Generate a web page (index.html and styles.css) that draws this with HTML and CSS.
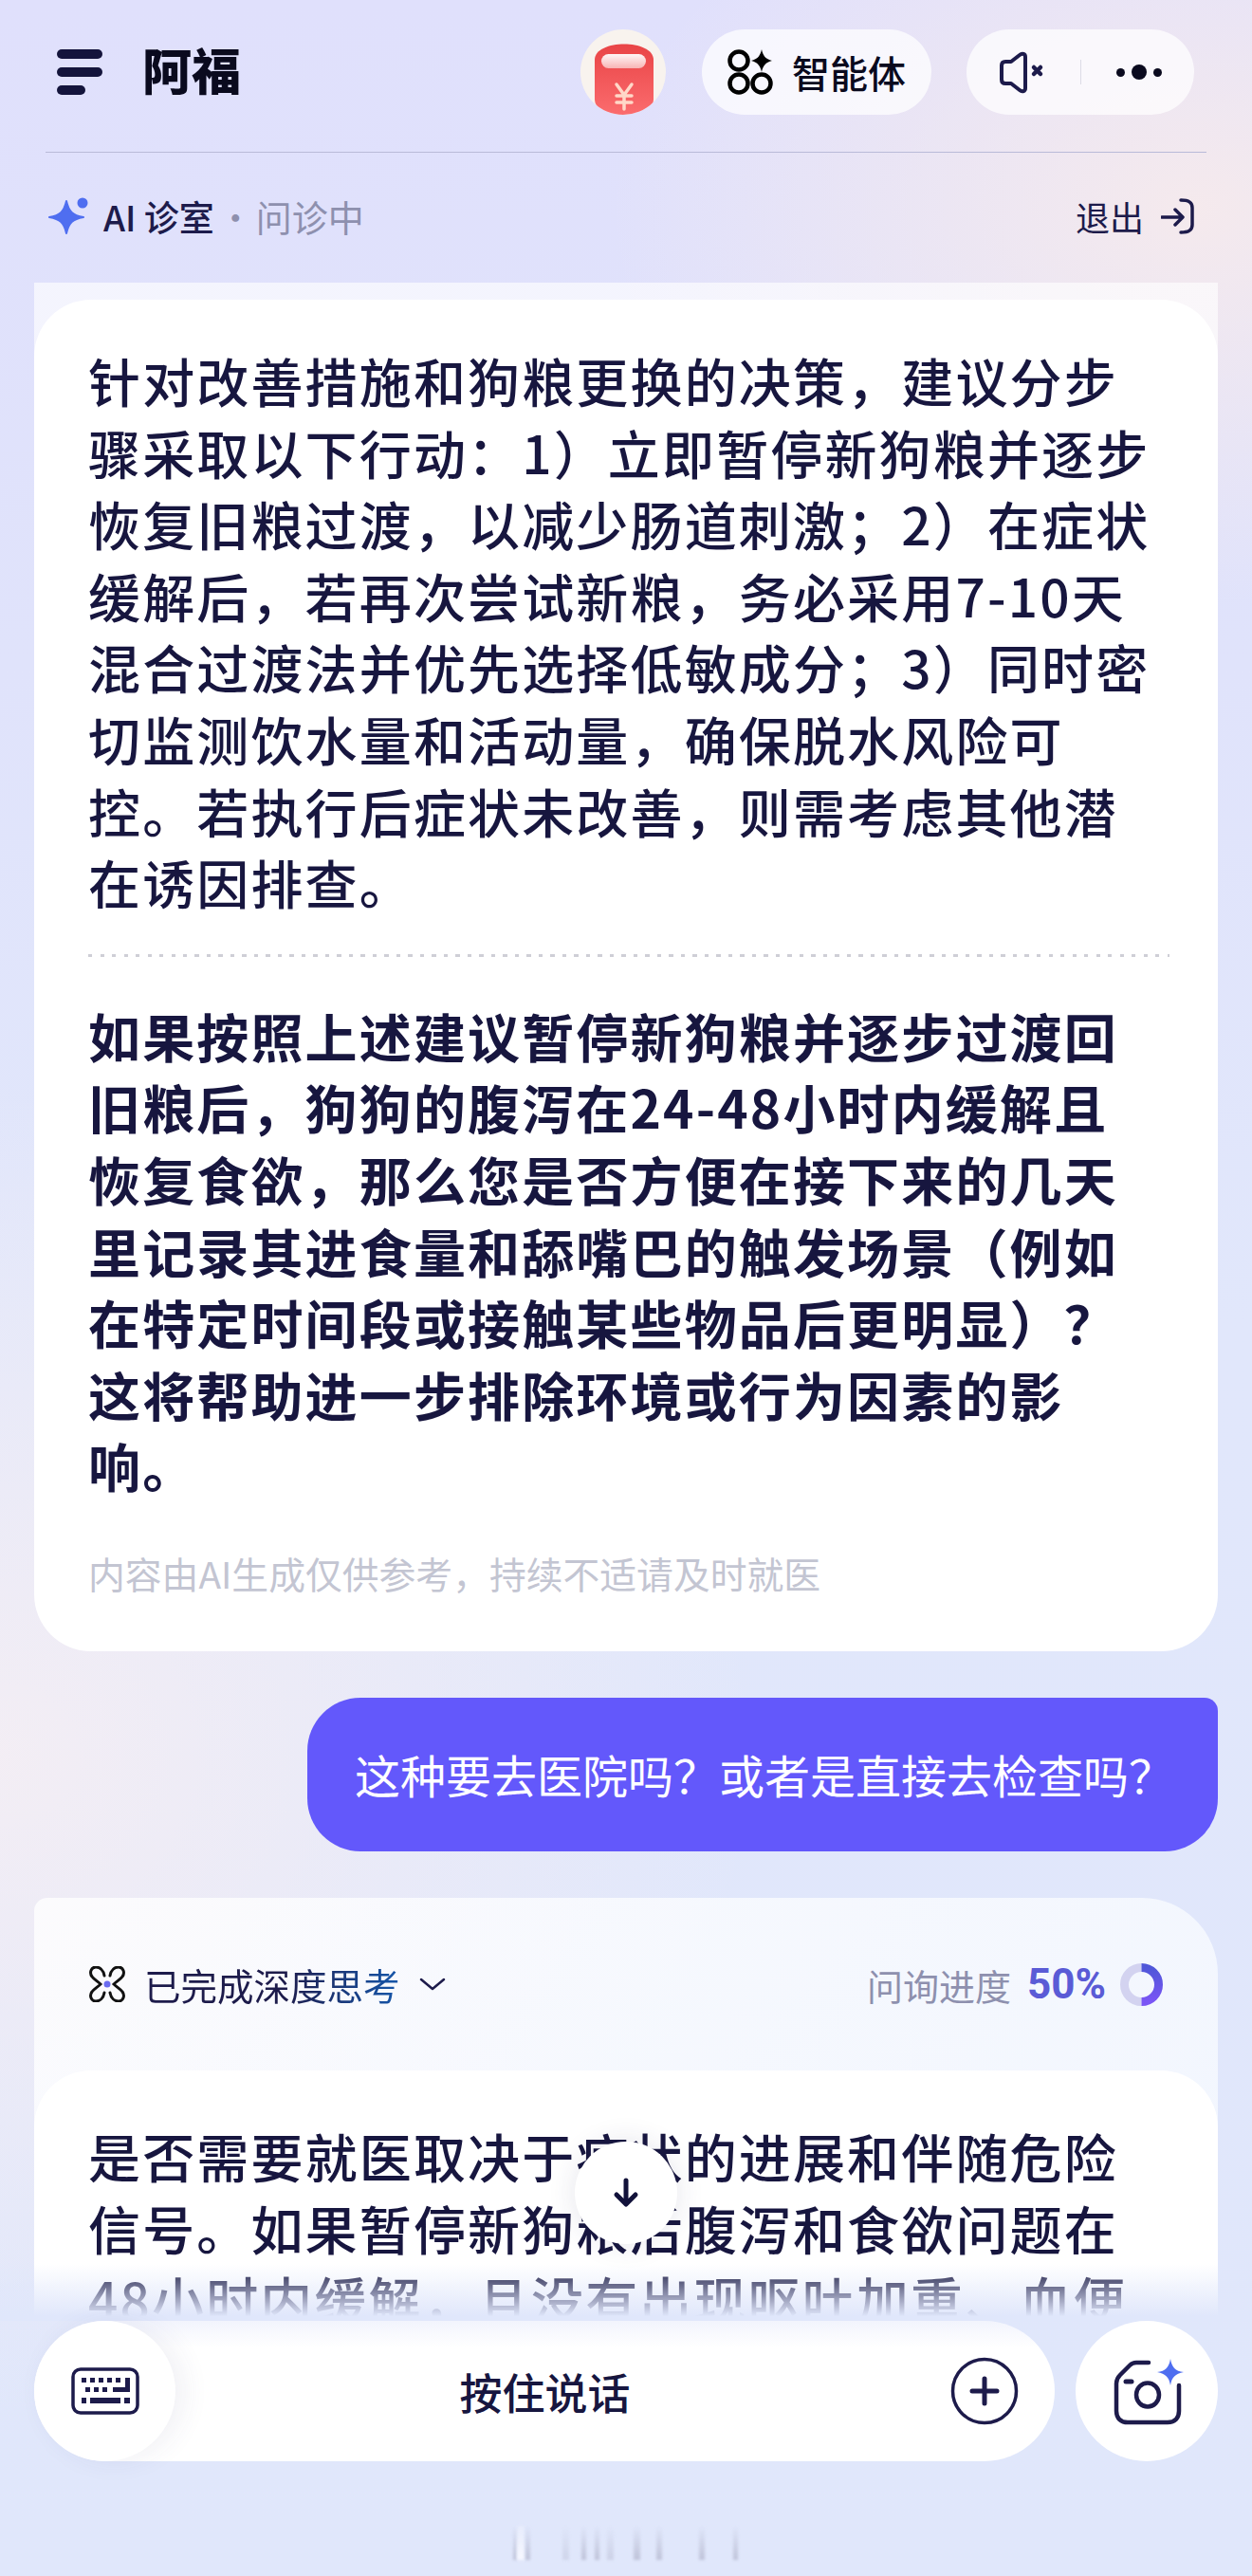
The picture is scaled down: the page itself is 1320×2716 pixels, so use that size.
FILE: index.html
```html
<!DOCTYPE html>
<html lang="zh-CN">
<head>
<meta charset="utf-8">
<title>阿福</title>
<link rel="stylesheet" href="styles.css">
</head>
<body>
<div class="app">
  <header class="topbar">
    <div class="brand">
      <span class="burger"><i></i><i></i><i class="short"></i></span>
      <span class="title">阿福</span>
    </div>
    <div class="actions">
      <span class="avatar">
        <svg viewBox="0 0 90 90" width="90" height="90">
          <defs>
            <linearGradient id="jar" x1="0" y1="0" x2="0" y2="1"><stop offset="0" stop-color="#e94446"/><stop offset="1" stop-color="#fb6c6e"/></linearGradient>
            <linearGradient id="lid" x1="0" y1="0" x2="0" y2="1"><stop offset="0" stop-color="#fff" stop-opacity=".95"/><stop offset="1" stop-color="#f8b4b4"/></linearGradient>
          </defs>
          <path d="M15 32C15 10 77 10 77 32V74C77 96 15 96 15 74z" fill="url(#jar)"/>
          <rect x="22" y="26" width="47" height="15" rx="7.500" fill="url(#lid)"/>
          <path d="M38 58l8 11 8-11M46 69v15M38 70h16M38 77h16" fill="none" stroke="#ffd8c8" stroke-width="3.500" stroke-linecap="round"/>
        </svg>
      </span>
      <span class="pill agent">
        <svg class="agent-icon" viewBox="0 0 48 48" width="48" height="48">
          <circle cx="12" cy="12" r="9.500" fill="none" stroke="#000" stroke-width="4.500"/>
          <circle cx="12" cy="36" r="9.500" fill="none" stroke="#000" stroke-width="4.500"/>
          <circle cx="36" cy="36" r="9.500" fill="none" stroke="#000" stroke-width="4.500"/>
          <path d="M36 0c1.500 7 4 10 11 12-7 2-9.500 5-11 12-1.500-7-4-10-11-12 7-2 9.500-5 11-12z"/>
        </svg>
        <span>智能体</span>
      </span>
      <span class="pill tools">
        <svg viewBox="0 0 50 50" width="50" height="50">
          <path d="M4 18c0-2 1-4 4-4h6L23 7c3-2.500 6-1 6 2v33c0 3-3 4.500-6 2L14 37H8c-3 0-4-2-4-4z" fill="none" stroke="#1d1b4b" stroke-width="4" stroke-linejoin="round"/>
          <path d="M38 20l7 7M45 20l-7 7" stroke="#1d1b4b" stroke-width="4.500" stroke-linecap="round"/>
        </svg>
        <i class="vsep"></i>
        <span class="dots"><i></i><i class="big"></i><i></i></span>
      </span>
    </div>
  </header>

  <div class="subbar">
    <div class="room">
      <svg viewBox="0 0 42 40" width="42" height="40">
        <path d="M19 4c2.500 11 6.500 15 18 17-11.500 2-15.500 6-18 17-2.500-11-6.500-15-18-17 11.500-2 15.500-6 18-17z" fill="#4f6ef0" stroke="#4f6ef0" stroke-width="2" stroke-linejoin="round"/>
        <circle cx="36" cy="6" r="5.500" fill="#4f6ef0"/>
      </svg>
      <span class="room-name">AI 诊室</span>
      <span class="room-sep">·</span>
      <span class="room-state">问诊中</span>
    </div>
    <div class="exit">
      <span>退出</span>
      <svg viewBox="0 0 36 40" width="36" height="40">
        <path d="M1 21h21M15 13l8 8-8 8" fill="none" stroke="#1d1b4b" stroke-width="3.500" stroke-linecap="round" stroke-linejoin="round"/>
        <path d="M21 3c8 0 12 2 12 8v18c0 6-4 8-12 8" fill="none" stroke="#1d1b4b" stroke-width="3.500" stroke-linecap="round"/>
      </svg>
    </div>
  </div>

  <main class="chat">
    <section class="group first">
      <article class="card">
        <p class="answer">针对改善措施和狗粮更换的决策，建议分步<br>骤采取以下行动：1）立即暂停新狗粮并逐步<br>恢复旧粮过渡，以减少肠道刺激；2）在症状<br>缓解后，若再次尝试新粮，务必采用7-10天<br>混合过渡法并优先选择低敏成分；3）同时密<br>切监测饮水量和活动量，确保脱水风险可<br>控。若执行后症状未改善，则需考虑其他潜<br>在诱因排查。</p>
        <hr class="dotted">
        <p class="answer strong">如果按照上述建议暂停新狗粮并逐步过渡回<br>旧粮后，狗狗的腹泻在24-48小时内缓解且<br>恢复食欲，那么您是否方便在接下来的几天<br>里记录其进食量和舔嘴巴的触发场景（例如<br>在特定时间段或接触某些物品后更明显）？<br>这将帮助进一步排除环境或行为因素的影<br>响。</p>
        <p class="note">内容由AI生成仅供参考，持续不适请及时就医</p>
      </article>
    </section>

    <div class="user-row">
      <div class="bubble">这种要去医院吗？或者是直接去检查吗？</div>
    </div>

    <section class="group second">
      <div class="think">
        <div class="think-left">
          <svg viewBox="0 0 38 38" width="38" height="38">
            <path d="M16 10C15 4 11 1 7 1 2 1 0 7 3 11c2 3 6 5 9 8-3 3-7 5-9 8-3 4-1 10 4 10 4 0 8-3 9-9M22 10c1-6 5-9 9-9 5 0 7 6 4 10-2 3-6 5-9 8 3 3 7 5 9 8 3 4 1 10-4 10-4 0-8-3-9-9" fill="none" stroke="#111" stroke-width="3" stroke-linecap="round"/>
            <circle cx="19" cy="19" r="3.500" fill="#6a6cf0"/>
          </svg>
          <span class="think-text">已完成深度思考</span>
          <svg class="chev" viewBox="0 0 28 14" width="28" height="14"><path d="M2 2l12 10L26 2" fill="none" stroke="#1d1b4b" stroke-width="2.500" stroke-linecap="round" stroke-linejoin="round"/></svg>
        </div>
        <div class="progress">
          <span class="progress-label">问询进度</span>
          <span class="progress-value">50%</span>
          <svg viewBox="0 0 45 45" width="45" height="45">
            <defs><linearGradient id="ring" x1="0" y1="0" x2="0" y2="1"><stop offset="0" stop-color="#4f57d8"/><stop offset="1" stop-color="#7a55f5"/></linearGradient></defs>
            <path d="M22.500 4.500a18 18 0 0 0 0 36" fill="none" stroke="#d3d3f0" stroke-width="9"/>
            <path d="M22.500 4.500a18 18 0 0 1 0 36" fill="none" stroke="url(#ring)" stroke-width="9"/>
          </svg>
        </div>
      </div>
      <article class="card">
        <p class="answer">是否需要就医取决于症状的进展和伴随危险<br>信号。如果暂停新狗粮后腹泻和食欲问题在<br>48小时内缓解，且没有出现呕吐加重、血便</p>
      </article>
    </section>

    <div class="fade"></div>
    <button class="down">
      <svg viewBox="0 0 30 32" width="30" height="32"><path d="M15 3v24M5 18l10 10 10-10" fill="none" stroke="#12123a" stroke-width="5" stroke-linecap="round" stroke-linejoin="round"/></svg>
    </button>
  </main>

  <div class="inputbar">
    <div class="talk">
      <span class="keyboard">
        <svg viewBox="0 0 72 50" width="72" height="50">
          <rect x="2" y="2" width="68" height="46" rx="8" fill="none" stroke="#1d1b4b" stroke-width="3.500"/>
          <path d="M11 11h5v5h-5zM20 11h5v5h-5zM29 11h5v5h-5zM38 11h5v5h-5zM47 11h5v5h-5zM57 11h5v15H44v-5h13zM15 21h5v5h-5zM24 21h5v5h-5zM33 21h5v5h-5zM11 32h5v6h-5zM20 32h32v6H20zM56 32h6v6h-6z" fill="#1d1b4b"/>
        </svg>
      </span>
      <span class="talk-text">按住说话</span>
      <svg class="plus" viewBox="0 0 72 72" width="72" height="72">
        <circle cx="36" cy="36" r="33.500" fill="none" stroke="#1d1b4b" stroke-width="3.500"/>
        <path d="M36 23v26M23 36h26" stroke="#1d1b4b" stroke-width="5" stroke-linecap="round"/>
      </svg>
    </div>
    <span class="camera">
      <svg viewBox="0 0 76 72" width="76" height="72">
        <path d="M37 6H24c-3 0-5 1-7 3L7 19c-3 3-4 5-4 9v29c0 8 5 12 12 12h42c8 0 12-5 12-12V30" fill="none" stroke="#1d1b4b" stroke-width="4.500" stroke-linecap="round"/>
        <path d="M13 26h6" stroke="#1d1b4b" stroke-width="5" stroke-linecap="round"/>
        <ellipse cx="36" cy="40" rx="12" ry="12.500" fill="none" stroke="#1d1b4b" stroke-width="4.500"/>
        <path d="M60 2c1.500 9 5 13 14 14-9 2-12.500 5-14 14-1.500-9-5-12-14-14 9-1 12.500-5 14-14z" fill="#4f6ef0"/>
      </svg>
    </span>
  </div>

  <footer class="footer">
    <i class="b"></i><i class="b"></i><i class="b"></i><i class="b"></i><i class="b"></i><i class="b"></i><i class="b"></i><i class="b"></i><i class="b"></i><i class="b"></i><i class="b"></i>
  </footer>
</div>
</body>
</html>
```

FILE: styles.css
```css
* { box-sizing: border-box; }
html, body { margin: 0; padding: 0; }
body { width: 1320px; height: 2716px; overflow: hidden; font-family: "Noto Sans CJK SC", "Noto Sans", sans-serif; color: #1d1b4b; }
i { display: block; }
p { margin: 0; }

.app {
  width: 1320px; height: 2716px; display: flex; flex-direction: column;
  background:
    radial-gradient(620px 420px at 1260px 220px, rgba(246,234,236,.95), rgba(246,234,236,0)),
    radial-gradient(800px 700px at 0 1850px, rgba(244,238,244,.95), rgba(244,238,244,0)),
    linear-gradient(180deg, #e0e0fc 0, #e0e3fb 700px, #e1e7fb 1400px, #e0e7fb 100%);
}

.topbar { height: 161px; margin: 0 48px; padding: 31px 13px 0 12px; display: flex; justify-content: space-between; align-items: flex-start; border-bottom: 1px solid #b9bad8; }
.brand { display: flex; align-items: center; height: 90px; gap: 42px; }
.burger { display: flex; flex-direction: column; gap: 9px; width: 48px; }
.burger i { height: 10px; border-radius: 5px; background: #14143c; }
.burger .short { width: 30px; }
.title { font-size: 52px; font-weight: 900; color: #0a0a1e; line-height: 60px; letter-spacing: 0; margin-bottom: 6px; }

.actions { display: flex; align-items: center; gap: 38px; }
.avatar { width: 90px; height: 90px; border-radius: 50%; background: #f8f3ee; overflow: hidden; display: block; }
.pill { height: 90px; border-radius: 45px; background: rgba(255,255,255,.72); display: flex; align-items: center; }
.agent { width: 242px; padding-left: 27px; gap: 20px; font-size: 40px; font-weight: 500; color: #0a0a1e; }
.tools { width: 240px; padding-left: 33px; margin-left: -1px; }
.vsep { width: 1px; height: 26px; background: #dcdce6; margin-left: 37px; }
.dots { display: flex; align-items: center; gap: 7px; margin-left: 37px; }
.dots i { width: 9px; height: 9px; border-radius: 50%; background: #0a0a1e; }
.dots .big { width: 16px; height: 16px; }

.subbar { height: 137px; padding: 0 60px 4px 51px; display: flex; justify-content: space-between; align-items: center; }
.room { display: flex; align-items: center; }
.room-name { font-size: 37px; margin-left: 16px; font-weight: 500; }
.room-sep { font-size: 37px; margin-left: 4px; color: #8e90ae; }
.room-state { font-size: 38px; margin-left: 3px; color: #8e90ae; }
.exit { display: flex; align-items: center; gap: 18px; font-size: 36px; }

.chat { height: 2149px; position: relative; overflow: hidden; padding: 0 36px; }
.group.first { padding-top: 18px; background: linear-gradient(180deg, rgba(255,255,255,.65) 80px, rgba(255,255,255,0) 80px); }
.card { background: #fff; border-radius: 60px; padding: 47px 30px 0 57px; }
.first .card { height: 1425px; }
.answer { font-size: 55px; font-weight: 500; letter-spacing: 2.150px; line-height: 75.6px; color: #17163f; white-space: nowrap; }
.strong { font-weight: 700; }
.dotted { border: 0; height: 3px; margin: 38px 21px 45px 0; background: repeating-linear-gradient(90deg, #cfcfd6 0, #cfcfd6 4px, transparent 4px, transparent 12.500px); }
.note { font-size: 38.800px; color: #c3c5d2; margin-top: 50px; line-height: 50px; }

.user-row { display: flex; justify-content: flex-end; margin-top: 49px; }
.bubble { width: 960px; height: 162px; border-radius: 56px 14px 56px 56px; background: #6358fb; color: #fff; font-size: 48px; line-height: 160px; padding-left: 50px; white-space: nowrap; }

.group.second { margin-top: 49px; border-radius: 14px 80px 0 0; background: linear-gradient(135deg, rgba(255,255,255,.8), rgba(244,248,255,.85)); }
.think { height: 182px; padding: 0 58px 0 58px; display: flex; align-items: center; justify-content: space-between; }
.think-left { display: flex; align-items: center; }
.think-text { font-size: 38.500px; margin-left: 20px; background: linear-gradient(90deg, #1d1b4b 55%, #1657ab); -webkit-background-clip: text; background-clip: text; color: transparent; }
.chev { margin-left: 20px; }
.progress { display: flex; align-items: center; }
.progress-label { font-size: 38px; color: #8e90ae; }
.progress-value { font-family: Roboto, sans-serif; font-size: 44px; font-weight: 700; color: #5a5bd6; margin: 0 15px 0 17px; }
.second .card { height: 400px; border-radius: 60px 60px 0 0; padding-top: 52px; }

.fade { position: absolute; left: 0; right: 0; bottom: 0; height: 60px; background: linear-gradient(180deg, rgba(224,231,251,0), #e0e7fb 92%); }
.down { position: absolute; left: 606px; top: 1960px; width: 108px; height: 108px; border: 0; border-radius: 50%; background: #fff; box-shadow: 0 0 30px rgba(40,40,90,.12); display: flex; align-items: center; justify-content: center; padding: 0; }

.inputbar { height: 148px; padding: 0 36px; display: flex; gap: 22px; }
.talk { position: relative; width: 1076px; height: 148px; border-radius: 74px; background: linear-gradient(180deg, #f2f4fd 0, #fff 28px); display: flex; align-items: center; padding-right: 38px; }
.keyboard { width: 149px; height: 148px; border-radius: 50%; background: #fff; box-shadow: 10px 0 28px rgba(60,60,110,.07); display: flex; align-items: center; justify-content: center; }
.talk-text { flex: 1; text-align: center; font-size: 45px; font-weight: 500; padding-right: 38px; color: #17163f; }
.plus { flex: none; }
.camera { width: 150px; height: 148px; padding-left: 5px; border-radius: 50%; background: #fff; display: flex; align-items: center; justify-content: center; }

.footer { flex: 1; padding: 68px 0 0 541px; display: flex; align-items: flex-start; }
.b { width: 5px; height: 36px; filter: blur(1.500px); background: linear-gradient(180deg, rgba(170,172,195,0), rgba(170,172,195,.6)); }
.b:nth-child(1) { width: 4px; }
.b:nth-child(2) { width: 8px; background: linear-gradient(180deg, rgba(245,246,255,.3), #f7f8ff); }
.b:nth-child(3) { margin-left: 1px; }
.b:nth-child(4) { margin-left: 34px; width: 7px; opacity: .5; }
.b:nth-child(5) { margin-left: 13px; }
.b:nth-child(6) { margin-left: 9px; }
.b:nth-child(7) { margin-left: 8px; width: 7px; opacity: .6; }
.b:nth-child(8) { margin-left: 21px; width: 7px; }
.b:nth-child(9) { margin-left: 17px; width: 6px; }
.b:nth-child(10) { margin-left: 39px; width: 6px; }
.b:nth-child(11) { margin-left: 30px; }
```
